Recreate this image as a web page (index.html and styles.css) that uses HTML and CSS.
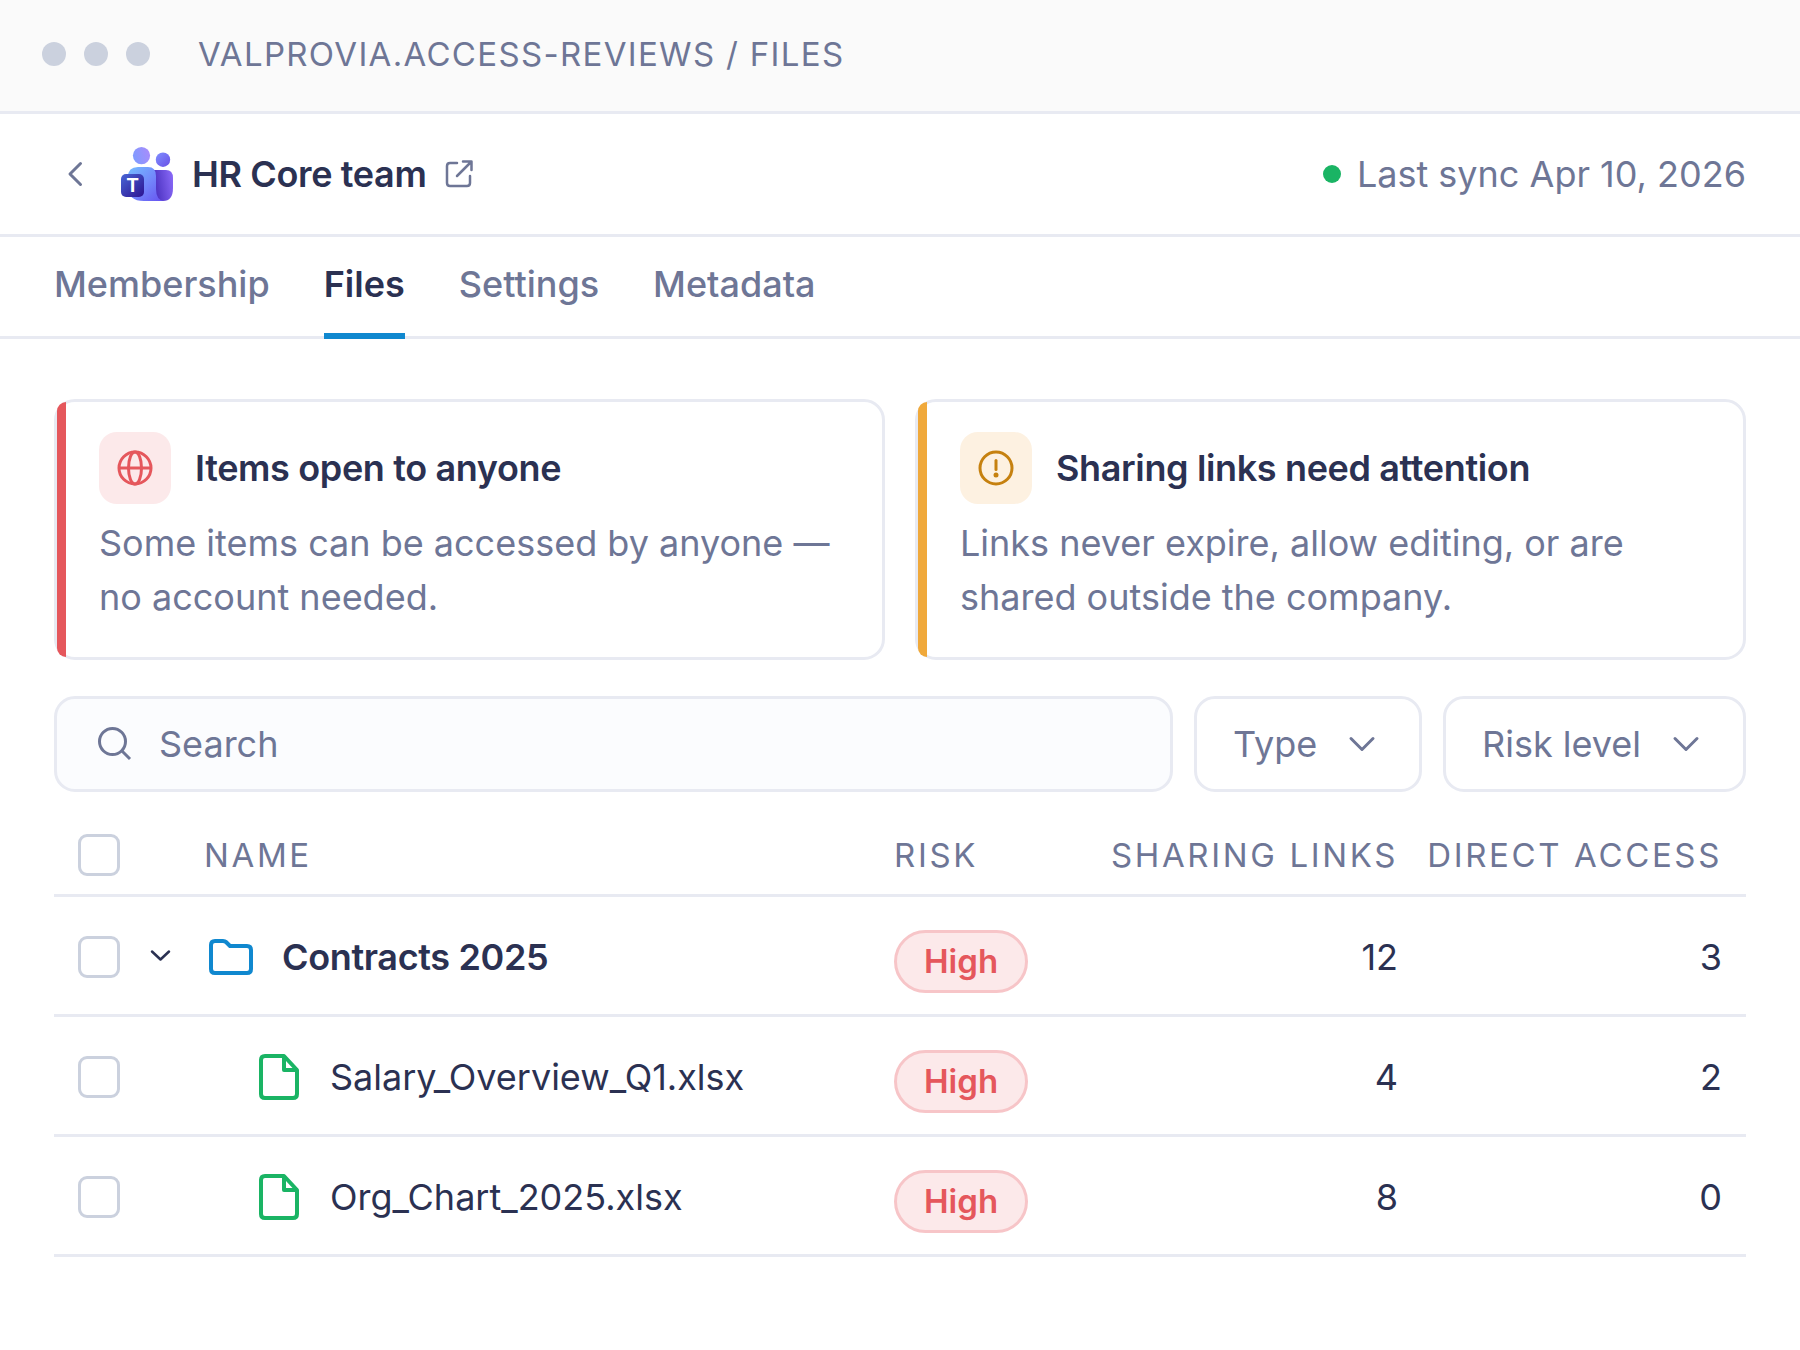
FILE: index.html
```html
<!DOCTYPE html>
<html lang="en">
<head>
    <meta charset="UTF-8">
    <meta name="viewport" content="width=device-width, initial-scale=1.0">
    <title>Access Reviews - Files</title>
    <link rel="stylesheet" href="styles.css">
</head>
<body>

    <div class="window-bar">
        <div class="dots">
            <span class="dot"></span>
            <span class="dot"></span>
            <span class="dot"></span>
        </div>
        <span class="window-path">VALPROVIA.ACCESS-REVIEWS / FILES</span>
    </div>

    <header class="team-header">
        <button type="button" class="back-btn" aria-label="Back">
            <svg width="42" height="42" viewBox="0 0 42 42" fill="none" stroke="currentColor" stroke-width="3" stroke-linecap="round" stroke-linejoin="round"><path d="M26.500 10.500L16 21L26.500 31.500"/></svg>
        </button>
        <svg class="team-logo" width="54" height="54" viewBox="0 0 54 54" aria-hidden="true">
            <defs>
                <linearGradient id="headLeft" x1="0" y1="0.600" x2="1" y2="0.300"><stop offset="0" stop-color="#7f9bff"/><stop offset="1" stop-color="#a88cfb"/></linearGradient>
                <linearGradient id="headRight" x1="0" y1="0" x2="1" y2="1"><stop offset="0" stop-color="#7f8fff"/><stop offset="1" stop-color="#6a50e6"/></linearGradient>
                <linearGradient id="bodyLeft" x1="0" y1="0" x2="1" y2="1"><stop offset="0" stop-color="#74bdff"/><stop offset="0.500" stop-color="#7388fb"/><stop offset="1" stop-color="#6650f0"/></linearGradient>
                <linearGradient id="bodyRight" x1="1" y1="0.300" x2="0.200" y2="0.500"><stop offset="0" stop-color="#8767f5"/><stop offset="1" stop-color="#5137c6"/></linearGradient>
                <linearGradient id="tile" x1="0" y1="0" x2="1" y2="1"><stop offset="0" stop-color="#4966d6"/><stop offset="1" stop-color="#2c1290"/></linearGradient>
            </defs>
            <circle cx="20.500" cy="8.600" r="8.600" fill="url(#headLeft)"/>
            <circle cx="42" cy="12.700" r="7.200" fill="url(#headRight)"/>
            <path d="M31 23H45Q52 23 52 31V41Q52 54 42 54H31Z" fill="url(#bodyRight)"/>
            <path d="M17 20H27Q35 20 35 29V42Q35 53 43 54H23Q7 54 7 40V30Q7 20 17 20Z" fill="url(#bodyLeft)"/>
            <rect x="0" y="27" width="23" height="23" rx="5" fill="url(#tile)"/>
            <text x="11.500" y="45" class="logo-letter">T</text>
        </svg>
        <h1>HR Core team</h1>
        <a href="#" class="open-link" aria-label="Open team in new window">
            <svg width="30" height="30" viewBox="0 0 30 30" fill="none" stroke="currentColor" stroke-width="2.500" stroke-linecap="round" stroke-linejoin="round"><path d="M13 4H6Q3 4 3 7V24Q3 27 6 27H23Q26 27 26 24V17"/><path d="M19 2.500H27.500V11M27 3L13 17"/></svg>
        </a>
        <div class="sync"><span class="sync-dot"></span>Last sync Apr 10, 2026</div>
    </header>

    <nav class="tabs">
        <a href="#" class="tab">Membership</a>
        <a href="#" class="tab active">Files</a>
        <a href="#" class="tab">Settings</a>
        <a href="#" class="tab">Metadata</a>
    </nav>

    <main>
        <div class="cards">
            <section class="card card-danger">
                <div class="card-head">
                    <span class="card-icon">
                        <svg width="36" height="36" viewBox="0 0 36 36" fill="none" stroke="currentColor" stroke-width="3"><circle cx="18" cy="18" r="16"/><ellipse cx="18" cy="18" rx="6.500" ry="16"/><path d="M2 18H34"/></svg>
                    </span>
                    <h2>Items open to anyone</h2>
                </div>
                <p>Some items can be accessed by anyone — no account needed.</p>
            </section>
            <section class="card card-warning">
                <div class="card-head">
                    <span class="card-icon">
                        <svg width="36" height="36" viewBox="0 0 36 36" fill="none" stroke="currentColor" stroke-width="3" stroke-linecap="round"><circle cx="18" cy="18" r="16"/><path d="M18 10.500V19.500"/><circle cx="18" cy="25" r="2.500" fill="currentColor" stroke="none"/></svg>
                    </span>
                    <h2>Sharing links need attention</h2>
                </div>
                <p>Links never expire, allow editing, or are shared outside the company.</p>
            </section>
        </div>

        <div class="filters">
            <label class="search">
                <svg width="36" height="36" viewBox="0 0 36 36" fill="none" stroke="currentColor" stroke-width="3"><circle cx="15.500" cy="15.500" r="13"/><path d="M24.500 24.500L33 33"/></svg>
                <input type="search" placeholder="Search" aria-label="Search">
            </label>
            <div class="filter">
                <select aria-label="Type">
                    <option>Type</option>
                </select>
                <svg class="filter-arrow" width="30" height="30" viewBox="0 0 30 30" fill="none" stroke="currentColor" stroke-width="3" stroke-linecap="round" stroke-linejoin="round"><path d="M4 9.500L15 20.500L26 9.500"/></svg>
            </div>
            <div class="filter">
                <select aria-label="Risk level">
                    <option>Risk level</option>
                </select>
                <svg class="filter-arrow" width="30" height="30" viewBox="0 0 30 30" fill="none" stroke="currentColor" stroke-width="3" stroke-linecap="round" stroke-linejoin="round"><path d="M4 9.500L15 20.500L26 9.500"/></svg>
            </div>
        </div>

        <table class="files">
            <colgroup>
                <col class="col-check">
                <col class="col-toggle">
                <col>
                <col class="col-risk">
                <col class="col-links">
                <col class="col-access">
            </colgroup>
            <thead>
                <tr>
                    <th class="check"><input type="checkbox" aria-label="Select all"></th>
                    <td></td>
                    <th>NAME</th>
                    <th>RISK</th>
                    <th class="num">SHARING LINKS</th>
                    <th class="num last">DIRECT ACCESS</th>
                </tr>
            </thead>
            <tbody>
                <tr>
                    <td class="check"><input type="checkbox" aria-label="Select Contracts 2025"></td>
                    <td>
                        <button type="button" class="toggle" aria-label="Collapse folder">
                            <svg width="24" height="24" viewBox="0 0 24 24" fill="none" stroke="currentColor" stroke-width="2.500" stroke-linecap="round" stroke-linejoin="round"><path d="M4 6.500L12.500 14.500L21 6.500"/></svg>
                        </button>
                    </td>
                    <td>
                        <div class="name folder">
                            <svg width="54" height="48" viewBox="0 0 54 48" fill="none" stroke="currentColor" stroke-width="4" stroke-linejoin="round"><path d="M11 8H19Q21 8 22 9L26 13H43Q47 13 47 17V36Q47 40 43 40H11Q7 40 7 36V12Q7 8 11 8Z"/></svg>
                            Contracts 2025
                        </div>
                    </td>
                    <td class="risk"><span class="badge">High</span></td>
                    <td class="num">12</td>
                    <td class="num last">3</td>
                </tr>
                <tr>
                    <td class="check"><input type="checkbox" aria-label="Select Salary_Overview_Q1.xlsx"></td>
                    <td></td>
                    <td>
                        <div class="name file">
                            <svg width="54" height="48" viewBox="0 0 54 48" fill="none" stroke="currentColor" stroke-width="4" stroke-linejoin="round"><path d="M13 3H32L45 17V41Q45 45 41 45H13Q9 45 9 41V7Q9 3 13 3Z"/><path d="M32 3V17H45"/></svg>
                            Salary_Overview_Q1.xlsx
                        </div>
                    </td>
                    <td class="risk"><span class="badge">High</span></td>
                    <td class="num">4</td>
                    <td class="num last">2</td>
                </tr>
                <tr>
                    <td class="check"><input type="checkbox" aria-label="Select Org_Chart_2025.xlsx"></td>
                    <td></td>
                    <td>
                        <div class="name file">
                            <svg width="54" height="48" viewBox="0 0 54 48" fill="none" stroke="currentColor" stroke-width="4" stroke-linejoin="round"><path d="M13 3H32L45 17V41Q45 45 41 45H13Q9 45 9 41V7Q9 3 13 3Z"/><path d="M32 3V17H45"/></svg>
                            Org_Chart_2025.xlsx
                        </div>
                    </td>
                    <td class="risk"><span class="badge">High</span></td>
                    <td class="num">8</td>
                    <td class="num last">0</td>
                </tr>
            </tbody>
        </table>
    </main>

</body>
</html>
```

FILE: styles.css
```css
* {
    box-sizing: border-box;
}
body {
    margin: 0;
    font-family: Inter, "Liberation Sans", sans-serif;
    font-size: 36px;
    line-height: 54px;
    color: #2b3152;
    background-color: #fff;
}
svg {
    display: block;
    flex-shrink: 0;
}
h1, h2, p {
    margin: 0;
}
h1, h2 {
    font-size: 36px;
    font-weight: 600;
    letter-spacing: -0.01em;
}
button {
    padding: 0;
    border: none;
    background: none;
    color: inherit;
    cursor: pointer;
}
a {
    color: inherit;
    text-decoration: none;
}

/* window bar */
.window-bar {
    display: flex;
    align-items: center;
    gap: 48px;
    padding: 27px 42px 30px;
    background-color: #fafafa;
    border-bottom: 3px solid #e8eaf2;
}
.dots {
    display: flex;
    gap: 18px;
}
.dot {
    width: 24px;
    height: 24px;
    border-radius: 50%;
    background-color: #cbd1de;
}
.window-path {
    font-size: 33px;
    letter-spacing: 0.04em;
    color: #6e7696;
}

/* team header */
.team-header {
    display: flex;
    align-items: center;
    padding: 33px 54px;
    border-bottom: 3px solid #e8eaf2;
}
.back-btn {
    margin-right: 25px;
    color: #6e7696;
}
.team-logo {
    margin-right: 17px;
}
.logo-letter {
    font-size: 19px;
    font-weight: 700;
    text-anchor: middle;
    fill: #fff;
}
.open-link {
    margin-left: 18px;
    color: #6e7696;
}
.sync {
    display: flex;
    align-items: center;
    gap: 16px;
    margin-left: auto;
    color: #6e7696;
}
.sync-dot {
    width: 18px;
    height: 18px;
    border-radius: 50%;
    background-color: #1ab464;
}

/* tabs */
.tabs {
    display: flex;
    gap: 54px;
    padding: 0 54px;
    border-bottom: 3px solid #e8eaf2;
}
.tab {
    padding: 20px 0 22px;
    margin-bottom: -3px;
    border-bottom: 6px solid transparent;
    font-weight: 500;
    color: #6e7696;
}
.tab.active {
    font-weight: 600;
    color: #2b3152;
    border-bottom-color: #1088cf;
}

main {
    padding: 60px 54px;
}

/* cards */
.cards {
    display: grid;
    grid-template-columns: 1fr 1fr;
    gap: 30px;
    margin-bottom: 36px;
}
.card {
    position: relative;
    padding: 30px 42px 33px;
    border: 3px solid #e8eaf2;
    border-radius: 21px;
}
.card::before {
    content: "";
    position: absolute;
    top: 0;
    bottom: 0;
    left: 0;
    width: 9px;
    border-radius: 9px 0 0 9px;
}
.card-danger::before {
    background-color: #e5575c;
}
.card-warning::before {
    background-color: #f0a93b;
}
.card-head {
    display: flex;
    align-items: center;
    gap: 24px;
    margin-bottom: 12px;
}
.card-icon {
    display: flex;
    align-items: center;
    justify-content: center;
    width: 72px;
    height: 72px;
    border-radius: 18px;
}
.card-danger .card-icon {
    color: #e5575c;
    background-color: #fce9ea;
}
.card-warning .card-icon {
    color: #c6810f;
    background-color: #fdf1e1;
}
.card p {
    color: #6e7696;
}

/* filters */
.filters {
    display: flex;
    gap: 21px;
    margin-bottom: 21px;
    color: #6e7696;
}
.search {
    display: flex;
    flex: 1;
    align-items: center;
    gap: 26px;
    height: 96px;
    padding: 0 40px;
    border: 3px solid #e8eaf2;
    border-radius: 21px;
    background-color: #fbfcfe;
}
.search input {
    flex: 1;
    min-width: 0;
    padding: 0;
    border: none;
    outline: none;
    background: none;
    font: inherit;
    color: #2b3152;
}
.search input::placeholder {
    color: #6e7696;
    opacity: 1;
}
.filter {
    position: relative;
}
.filter select {
    height: 96px;
    padding: 0 101px 0 36px;
    border: 3px solid #e8eaf2;
    border-radius: 21px;
    appearance: none;
    background-color: #fff;
    font: inherit;
    color: inherit;
}
.filter-arrow {
    position: absolute;
    top: 33px;
    right: 45px;
    pointer-events: none;
}

/* files table */
.files {
    width: 100%;
    table-layout: fixed;
    border-collapse: separate;
    border-spacing: 0;
}
.col-check {
    width: 78px;
}
.col-toggle {
    width: 72px;
}
.col-risk {
    width: 195px;
}
.col-links {
    width: 309px;
}
.col-access {
    width: 348px;
}
.files th, .files td {
    height: 120px;
    padding: 3px 0 0;
    border-bottom: 3px solid #e8eaf2;
    text-align: left;
    white-space: nowrap;
}
.files thead th, .files thead td {
    height: 84px;
    font-size: 33px;
    font-weight: 400;
    letter-spacing: 0.08em;
    color: #6e7696;
}
.files .check {
    padding-left: 24px;
}
.files .num {
    text-align: right;
}
.files .last {
    padding-right: 24px;
}
.files .risk {
    padding-top: 12px;
}
.files input {
    display: block;
    width: 42px;
    height: 42px;
    margin: 0;
    border: 3px solid #cbd1de;
    border-radius: 9px;
    appearance: none;
    background-color: #fff;
}
.files input:checked {
    background-color: #1088cf;
}
.toggle {
    display: block;
    margin-left: 16px;
}
.name {
    display: flex;
    align-items: center;
    gap: 24px;
}
.name.folder {
    font-weight: 600;
    letter-spacing: -0.01em;
}
.name.folder svg {
    color: #1088cf;
}
.name.file {
    padding-left: 48px;
}
.name.file svg {
    color: #1ab464;
}
.badge {
    display: block;
    width: fit-content;
    padding: 0 27px;
    border: 3px solid #f7c5c8;
    border-radius: 32px;
    background-color: #fce9ea;
    font-size: 33px;
    font-weight: 600;
    line-height: 57px;
    color: #e5575c;
}
```
